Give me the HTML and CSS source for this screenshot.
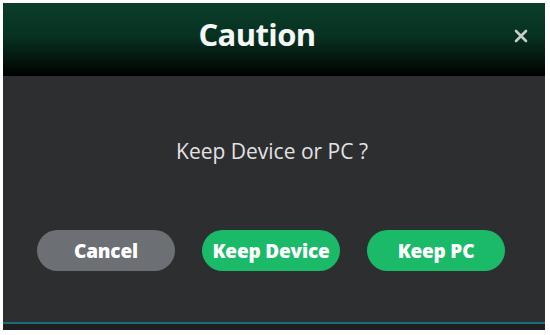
FILE: index.html
```html
<!DOCTYPE html>
<html>
<head>
<meta charset="utf-8">
<link rel="stylesheet" href="styles.css">
</head>
<body>
<div class="dialog">
  <div class="header">
    <h1 class="title">Caution</h1>
    <svg class="close" width="14" height="14" viewBox="0 0 14 14"><path d="M2 2 L12 12 M12 2 L2 12" stroke="#c6cec9" stroke-width="2.6" stroke-linecap="round"/></svg>
  </div>
  <div class="content">
    <p class="message">Keep Device or PC ?</p>
    <div class="buttons">
      <button class="btn btn-cancel">Cancel</button>
      <button class="btn btn-green">Keep Device</button>
      <button class="btn btn-green">Keep PC</button>
    </div>
  </div>
  <div class="footer"></div>
</div>
</body>
</html>
```
FILE: styles.css
```css
html, body {
  margin: 0;
  padding: 0;
  background: #ffffff;
}
body {
  padding: 3px 5px 5px 3px;
  font-family: "Open Sans", "Noto Sans", sans-serif;
}
.dialog {
  width: 542px;
  height: 327px;
  display: flex;
  flex-direction: column;
  background: #2d2e30;
}
.header {
  position: relative;
  height: 73px;
  flex: none;
  display: flex;
  align-items: center;
  justify-content: center;
  background: linear-gradient(to bottom, #0b3e2a 0%, #073221 45%, #03140c 80%, #000000 100%);
}
.title {
  margin: 0;
  margin-top: -12px;
  margin-right: 34px;
  color: #f4f7f5;
  font-size: 31px;
  font-weight: 700;
  letter-spacing: -0.6px;
}
.close {
  position: absolute;
  right: 17px;
  top: 26px;
}
.content {
  flex: 1;
  display: flex;
  flex-direction: column;
  align-items: center;
}
.message {
  margin: 61px 0 0 -4px;
  color: #e2e2e2;
  font-size: 21px;
  line-height: 28px;
}
.buttons {
  margin-top: 65px;
  display: flex;
  gap: 27px;
  margin-left: -6px;
}
.btn {
  width: 138px;
  height: 41px;
  border: none;
  border-radius: 21px;
  color: #ffffff;
  font-family: "Open Sans", "Noto Sans", sans-serif;
  font-size: 19px;
  font-weight: 800;
  letter-spacing: -0.2px;
  padding: 0;
}
.btn-cancel {
  background: #6c6f74;
}
.btn-green {
  background: #1bba69;
}
.footer {
  flex: none;
  height: 6px;
  border-top: 2px solid #1d6d78;
  background: #1e1f21;
}
```
